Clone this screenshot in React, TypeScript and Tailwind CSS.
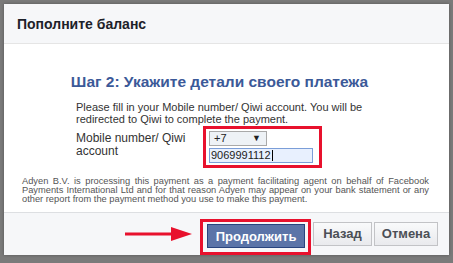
export default function App() {
  return (
    <div className="w-[453px] h-[263px] bg-[#7a7a7a] pt-[4px] pl-[4px] overflow-hidden">
      <div className="w-[445px] h-[251px] bg-white flex flex-col shadow-[0_0_3px_rgba(0,0,0,0.3)]">
        {/* Header */}
        <div className="h-[40px] bg-[#f6f7f9] border-b border-[#e5e5e5] pl-[13px] pt-[2px] flex items-center flex-shrink-0">
          <h1 className="text-[14px] font-bold text-[#1d2129] font-['Liberation_Sans',sans-serif]">
            Пополните баланс
          </h1>
        </div>

        {/* Body */}
        <div className="flex-1 flex flex-col font-['Liberation_Sans',sans-serif]">
          <h2 className="mt-[30px] text-center text-[15.5px] leading-[16px] font-bold text-[#3b5998] pr-[14px]">
            Шаг 2: Укажите детали своего платежа
          </h2>

          <div className="pl-[72px] mt-[12px] w-[385px]">
            <p className="text-[11px] leading-[11.5px] text-[#333]">
              Please fill in your Mobile number/ Qiwi account. You will be redirected to Qiwi to complete the payment.
            </p>

            <div className="flex mt-[1px]">
              <div className="w-[127px] pt-[6px] text-[12px] leading-[13px] text-[#333]">
                Mobile number/ Qiwi account
              </div>
              <div className="w-[119px] h-[42px] border-[3px] border-[#e8112d] pl-[3px] pt-[2px] flex flex-col gap-[2px]">
                <div className="w-[58px] h-[15px] bg-[#eef2f6] border border-[#a9a9a9] flex items-center justify-between pl-[4px] pr-[5px] text-[11px] text-[#222]">
                  <span>+7</span>
                  <span className="text-[9px]">▼</span>
                </div>
                <div className="w-[104px] h-[15px] bg-[#e8f0fe] border border-[#7b9ed8] flex items-center pl-[1px] text-[11px] text-[#222]">
                  <span>9069991112</span>
                  <span className="w-px h-[11px] bg-black ml-[1px]" />
                </div>
              </div>
            </div>
          </div>

          <p className="mt-[9px] ml-[18px] mr-[20px] text-[9.3px] leading-[9px] text-[#555] text-justify [text-align-last:left]">
            Adyen B.V. is processing this payment as a payment facilitating agent on behalf of Facebook Payments International Ltd and for that reason Adyen may appear on your bank statement or any other report from the payment method you use to make this payment.
          </p>
        </div>

        {/* Footer */}
        <div className="h-[43px] bg-[#f6f7f9] border-t border-[#dddfe2] flex items-center justify-end pr-[11px] flex-shrink-0 font-['Liberation_Sans',sans-serif]">
          <svg width="67" height="14" viewBox="0 0 67 14" className="mr-[8px]">
            <rect x="0" y="5.5" width="50" height="3" fill="#e8112d" />
            <polygon points="46,0 67,7 46,14" fill="#e8112d" />
          </svg>
          <div className="w-[111px] h-[36px] border-[3px] border-[#e8112d] mt-[5px] pl-[4px] pt-[2px]">
            <button className="w-[98px] h-[24px] bg-[#5b74a8] border border-[#29447e] text-white text-[13px] font-bold">
              Продолжить
            </button>
          </div>
          <button className="ml-[2px] w-[59px] h-[24px] bg-gradient-to-b from-[#f9fafb] to-[#e9eaed] border border-[#c2c3c6] text-[#4b4f56] text-[13px] font-bold">
            Назад
          </button>
          <button className="ml-[2px] w-[64px] h-[24px] bg-gradient-to-b from-[#f9fafb] to-[#e9eaed] border border-[#c2c3c6] text-[#4b4f56] text-[13px] font-bold">
            Отмена
          </button>
        </div>
      </div>
    </div>
  );
}
